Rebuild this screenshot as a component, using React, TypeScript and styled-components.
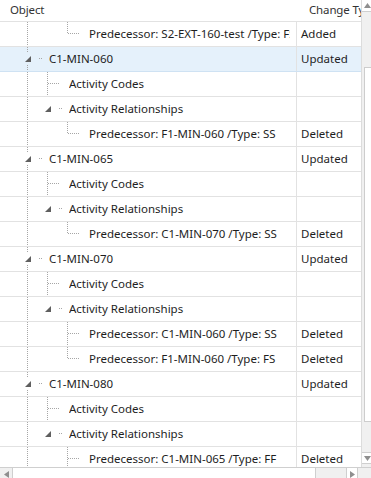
import React from 'react'
import styled, { createGlobalStyle } from 'styled-components'

const LINE = '#a6a6a6'
const GRID = '#e2e2e2'
const TEXT = '#1e1e1e'

const GlobalStyle = createGlobalStyle`
  html, body {
    margin: 0;
    padding: 0;
    background: #ffffff;
  }
  body {
    font-family: "Noto Sans", "Open Sans", sans-serif;
    font-size: 11.5px;
    color: ${TEXT};
  }
`

const Frame = styled.div`
  width: 371px;
  height: 478px;
  overflow: hidden;
  display: grid;
  grid-template-columns: 361px 10px;
  grid-template-rows: 467px 11px;
`

const Table = styled.div`
  display: flex;
  flex-direction: column;
  overflow: hidden;
`

const Header = styled.div`
  display: flex;
  flex: 0 0 21px;
  border-bottom: 1px solid ${GRID};
  line-height: 20px;
  color: #333333;
`

const HeaderCell = styled.div<{ $width?: number; $pad: number }>`
  ${(p) => (p.$width ? `width: ${p.$width}px; flex: 0 0 auto;` : 'flex: 1;')}
  padding-left: ${(p) => p.$pad}px;
  box-sizing: border-box;
  white-space: nowrap;
  overflow: hidden;
  letter-spacing: -0.15px;
`

const Row = styled.div<{ $selected?: boolean }>`
  display: flex;
  flex: 0 0 24px;
  border-bottom: 1px solid ${(p) => (p.$selected ? '#cfe2f3' : GRID)};
  background: ${(p) => (p.$selected ? '#e5f1fb' : 'transparent')};
`

const TreeCell = styled.div`
  width: 297px;
  flex: 0 0 auto;
  box-sizing: border-box;
  border-right: 1px solid ${GRID};
  padding-left: 17px;
  padding-right: 6px;
  display: flex;
  overflow: hidden;
`

const TypeCell = styled.div`
  flex: 1;
  padding-left: 4px;
  line-height: 24px;
  white-space: nowrap;
  overflow: hidden;
`

const vDots = `repeating-linear-gradient(to bottom, ${LINE} 0 1px, transparent 1px 2px)`
const hDots = `repeating-linear-gradient(to right, ${LINE} 0 1px, transparent 1px 2px)`

// one ancestor column: a dotted vertical line when that ancestor has siblings below
const Guide = styled.div<{ $line: boolean }>`
  flex: 0 0 20px;
  background: ${(p) => (p.$line ? `${vDots} 10px 0 / 1px 100% no-repeat` : 'none')};
`

const LeafJoint = styled.div<{ $full: boolean }>`
  flex: 0 0 32px;
  background:
    ${vDots} 10px 0 / 1px ${(p) => (p.$full ? '24px' : '12px')} no-repeat,
    ${hDots} 11px 11px / 12px 1px no-repeat;
`

const GroupJoint = styled.div<{ $above: boolean; $below: boolean }>`
  flex: 0 0 32px;
  display: flex;
  align-items: center;
  padding-left: 8px;
  box-sizing: border-box;
  background:
    ${(p) => (p.$above ? `${vDots} 10px 0 / 1px 6px no-repeat,` : '')}
    ${(p) => (p.$below ? `${vDots} 10px 18px / 1px 6px no-repeat,` : '')}
    ${hDots} 22px 11px / 3px 1px no-repeat;
`

const Expander = styled.svg`
  width: 6px;
  height: 6px;
  margin-top: -1px;
  display: block;
`

const Label = styled.div`
  flex: 1;
  min-width: 0;
  line-height: 24px;
  white-space: nowrap;
  overflow: hidden;
`

const VScroll = styled.div`
  display: flex;
  flex-direction: column;
  overflow: hidden;
  border-left: 1px solid #dcdcdc;
  background: #f0f0f0;
`

const ArrowBox = styled.div<{ $edge: 'top' | 'bottom' }>`
  flex: 0 0 12px;
  width: 17px;
  display: flex;
  align-items: center;
  padding-left: 2px;
  box-sizing: border-box;
  background: #ffffff;
  border-${(p) => (p.$edge === 'top' ? 'bottom' : 'top')}: 1px solid #cfcfcf;
  ${(p) => (p.$edge === 'bottom' ? 'border-bottom: 1px solid #cfcfcf; margin-bottom: 3px;' : '')}
`

const Arrow = styled.svg`
  width: 7px;
  height: 7px;
  display: block;
`

const VTrack = styled.div`
  flex: 1;
  padding: 55px 0 30px 2px;
  display: flex;
`

const VThumb = styled.div`
  width: 15px;
  flex: 0 0 auto;
  background: #ffffff;
  border: 1px solid #cdcdcd;
`

const HScroll = styled.div`
  grid-column: 1 / 3;
  display: flex;
  border-top: 1px solid #cfcfcf;
  background: #f0f0f0;
`

const HArrow = styled.div<{ $boxed?: boolean }>`
  flex: 0 0 12px;
  display: flex;
  justify-content: center;
  padding-top: 3px;
  background: ${(p) => (p.$boxed ? '#ffffff' : 'transparent')};
  border-left: ${(p) => (p.$boxed ? '1px solid #cfcfcf' : 'none')};
  border-right: ${(p) => (p.$boxed ? '1px solid #cfcfcf' : 'none')};
  box-sizing: border-box;
`

const HThumb = styled.div`
  flex: 0 0 304px;
  background: #ffffff;
  border-left: 1px solid #cfcfcf;
  border-right: 1px solid #cfcfcf;
  box-sizing: border-box;
`

const HGap = styled.div<{ $w: number }>`
  flex: 0 0 ${(p) => p.$w}px;
`

const arrowPoints = {
  up: '3.5,1 7,6 0,6',
  down: '0,1 7,1 3.5,6',
  left: '6,0 6,7 1,3.5',
  right: '1,0 1,7 6,3.5',
}

const ArrowIcon = ({ dir }: { dir: keyof typeof arrowPoints }) => (
  <Arrow viewBox="0 0 7 7">
    <polygon points={arrowPoints[dir]} fill="#8f8f8f" />
  </Arrow>
)

type Item = {
  label: string
  change?: string
  level: number
  group?: boolean
  full?: boolean
  above?: boolean
  below?: boolean
  selected?: boolean
}

const guidesFor = (level: number) => [true, false].slice(0, level)

const activity = (
  id: string,
  preds: { label: string; full?: boolean }[],
  selected = false,
): Item[] => [
  { label: id, change: 'Updated', level: 0, group: true, above: true, below: true, selected },
  { label: 'Activity Codes', level: 1, full: true },
  { label: 'Activity Relationships', level: 1, group: true },
  ...preds.map((p) => ({ label: p.label, change: 'Deleted', level: 2, full: p.full })),
]

const rows: Item[] = [
  { label: 'Predecessor: S2-EXT-160-test /Type: FS', change: 'Added', level: 2 },
  ...activity('C1-MIN-060', [{ label: 'Predecessor: F1-MIN-060 /Type: SS' }], true),
  ...activity('C1-MIN-065', [{ label: 'Predecessor: C1-MIN-070 /Type: SS' }]),
  ...activity('C1-MIN-070', [
    { label: 'Predecessor: C1-MIN-060 /Type: SS', full: true },
    { label: 'Predecessor: F1-MIN-060 /Type: FS' },
  ]),
  ...activity('C1-MIN-080', [{ label: 'Predecessor: C1-MIN-065 /Type: FF', full: true }]),
]

const TreeRow = ({ item }: { item: Item }) => (
  <Row $selected={item.selected}>
    <TreeCell>
      {guidesFor(item.level).map((on, i) => (
        <Guide key={i} $line={on} />
      ))}
      {item.group ? (
        <GroupJoint $above={!!item.above} $below={!!item.below}>
          <Expander viewBox="0 0 6 6">
            <polygon points="6,0 6,6 0,6" fill="#5f5f5f" />
          </Expander>
        </GroupJoint>
      ) : (
        <LeafJoint $full={!!item.full} />
      )}
      <Label>{item.label}</Label>
    </TreeCell>
    <TypeCell>{item.change}</TypeCell>
  </Row>
)

export default function App() {
  return (
    <>
      <GlobalStyle />
      <Frame>
        <Table>
          <Header>
            <HeaderCell $width={297} $pad={10}>
              Object
            </HeaderCell>
            <HeaderCell $pad={12}>Change Type</HeaderCell>
          </Header>
          {rows.map((item, i) => (
            <TreeRow key={i} item={item} />
          ))}
        </Table>
        <VScroll>
          <ArrowBox $edge="top">
            <ArrowIcon dir="up" />
          </ArrowBox>
          <VTrack>
            <VThumb />
          </VTrack>
          <ArrowBox $edge="bottom">
            <ArrowIcon dir="down" />
          </ArrowBox>
        </VScroll>
        <HScroll>
          <HArrow>
            <ArrowIcon dir="left" />
          </HArrow>
          <HThumb />
          <HGap $w={30} />
          <HArrow $boxed>
            <ArrowIcon dir="right" />
          </HArrow>
        </HScroll>
      </Frame>
    </>
  )
}
